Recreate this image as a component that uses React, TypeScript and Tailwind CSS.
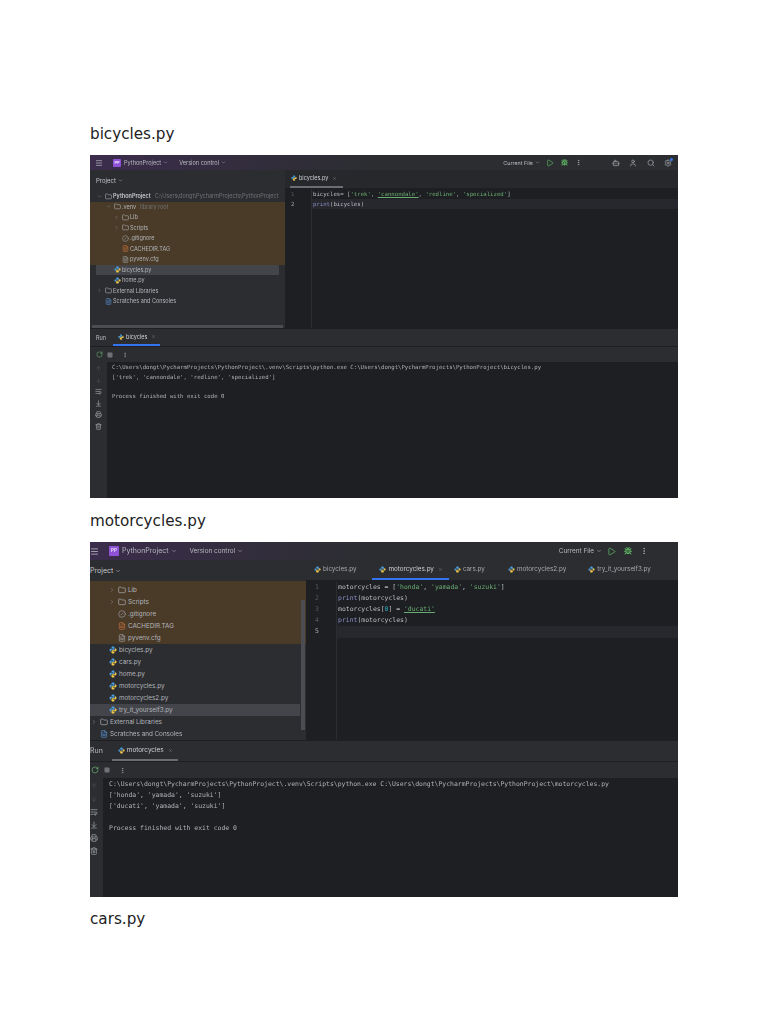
import {
  ArrowDown, ArrowDownToLine, ArrowUp, Bug, ChevronDown, ChevronRight, CircleSlash, FileText, Folder,
  Menu, MoreVertical, Play, Printer, RotateCw, Search, Settings, Square, Trash2, User, WrapText, X, Bot,
} from 'lucide-react';

const mono = "font-['DejaVu_Sans_Mono',monospace]";
const ui = "font-['Inter',sans-serif]";

const PythonIcon = ({ size }: { size: number }) => (
  <svg width={size} height={size} viewBox="0 0 16 16" className="shrink-0">
    <path d="M8 1C5.5 1 5 2 5 3v1.500h3.500V5.500H3C1.500 5.500 1 6.800 1 8.200S1.500 11 3 11h1.200V9.200C4.200 8 5 7.500 6 7.500h3.500c1 0 1.500-.7 1.500-1.500V3c0-1.200-1-2-3-2z" fill="#4b9cd8" />
    <path d="M8 15c2.500 0 3-1 3-2v-1.500H7.500v-1H13c1.500 0 2-1.300 2-2.700S14.500 5 13 5h-1.200v1.800c0 1.200-.8 1.700-1.800 1.700H6.500c-1 0-1.500.7-1.500 1.500v3c0 1.200 1 2 3 2z" fill="#f2c84b" />
  </svg>
);

type Kind = 'folder' | 'py' | 'ignore' | 'tag' | 'cfg' | 'lib' | 'scratch';
type Row = { label: string; pad: string; kind: Kind; chevron?: 'down' | 'right'; note?: string; selected?: boolean; bold?: boolean };

const RowIcon = ({ kind, size }: { kind: Kind; size: number }) => {
  if (kind === 'py') return <PythonIcon size={size} />;
  if (kind === 'ignore') return <CircleSlash size={size} className="shrink-0 text-[#9a9ca3]" />;
  if (kind === 'tag') return <FileText size={size} className="shrink-0 text-[#c4713d]" />;
  if (kind === 'cfg') return <FileText size={size} className="shrink-0 text-[#a4a6ad]" />;
  if (kind === 'scratch') return <FileText size={size} className="shrink-0 text-[#5c93d6]" />;
  return <Folder size={size} className="shrink-0 text-[#b0b2b8]" />;
};

const TreeRow = ({ row, big }: { row: Row; big?: boolean }) => (
  <div className={`flex items-center ${big ? 'h-[12px] gap-[2px] text-[6.3px]' : 'h-[10.5px] gap-[1px] text-[5.5px]'} ${row.pad} ${row.selected ? 'bg-[#43454a]' : ''} ${row.selected && !big ? 'rounded-[1px]' : ''} whitespace-nowrap`}>
    <span className={`flex justify-center shrink-0 text-[#8b8d93] ${big ? 'w-[8px]' : 'w-[9px]'}`}>
      {row.chevron === 'down' && <ChevronDown size={big ? 6 : 5} />}
      {row.chevron === 'right' && <ChevronRight size={big ? 6 : 5} />}
    </span>
    <RowIcon kind={row.kind} size={big ? 8 : 7} />
    <span className={row.bold ? 'font-semibold text-[#c8cad0]' : 'text-[#b4b6bc]'}>{row.label}</span>
    {row.note && <span className="ml-[3px] text-[#6f7177]">{row.note}</span>}
  </div>
);

const Tab = ({ label, className, iconSize = 7, active, close }: { label: string; className: string; iconSize?: number; active?: boolean; close?: boolean }) => (
  <div className={`flex items-center gap-[2px] h-full border-b-2 ${active ? 'border-[#3574f0] text-[#d0d2d8]' : 'border-transparent text-[#a8aab0]'} ${className}`}>
    <PythonIcon size={iconSize} />
    <span>{label}</span>
    {close && <X size={5} className="text-[#7a7c82] ml-[2px]" />}
  </div>
);

const Str = ({ children }: { children: string }) => <span className="text-[#6aab73]">{children}</span>;
const Fn = ({ children }: { children: string }) => <span className="text-[#8c8fc9]">{children}</span>;

const shotOneOrange: Row[] = [
  { label: '.venv', pad: 'pl-[14px]', kind: 'folder', chevron: 'down', note: 'library root' },
  { label: 'Lib', pad: 'pl-[22px]', kind: 'folder', chevron: 'right' },
  { label: 'Scripts', pad: 'pl-[22px]', kind: 'folder', chevron: 'right' },
  { label: '.gitignore', pad: 'pl-[22px]', kind: 'ignore' },
  { label: 'CACHEDIR.TAG', pad: 'pl-[22px]', kind: 'tag' },
  { label: 'pyvenv.cfg', pad: 'pl-[22px]', kind: 'cfg' },
];
const shotOneRest: Row[] = [
  { label: 'home.py', pad: 'pl-[14px]', kind: 'py' },
  { label: 'External Libraries', pad: 'pl-[5px]', kind: 'lib', chevron: 'right' },
  { label: 'Scratches and Consoles', pad: 'pl-[5px]', kind: 'scratch' },
];

const shotTwoOrange: Row[] = [
  { label: 'Lib', pad: 'pl-[18px]', kind: 'folder', chevron: 'right' },
  { label: 'Scripts', pad: 'pl-[18px]', kind: 'folder', chevron: 'right' },
  { label: '.gitignore', pad: 'pl-[18px]', kind: 'ignore' },
  { label: 'CACHEDIR.TAG', pad: 'pl-[18px]', kind: 'tag' },
  { label: 'pyvenv.cfg', pad: 'pl-[18px]', kind: 'cfg' },
];
const shotTwoRest: Row[] = [
  { label: 'bicycles.py', pad: 'pl-[9px]', kind: 'py' },
  { label: 'cars.py', pad: 'pl-[9px]', kind: 'py' },
  { label: 'home.py', pad: 'pl-[9px]', kind: 'py' },
  { label: 'motorcycles.py', pad: 'pl-[9px]', kind: 'py' },
  { label: 'motorcycles2.py', pad: 'pl-[9px]', kind: 'py' },
  { label: 'try_it_yourself3.py', pad: 'pl-[9px]', kind: 'py', selected: true },
  { label: 'External Libraries', pad: 'pl-[0px]', kind: 'lib', chevron: 'right' },
  { label: 'Scratches and Consoles', pad: 'pl-[0px]', kind: 'scratch' },
];

const RunTools = ({ big }: { big?: boolean }) => {
  const s = big ? 8 : 7;
  return (
    <>
      <ArrowUp size={s} className="text-[#4a4c52]" />
      <ArrowDown size={s} className="text-[#4a4c52]" />
      <WrapText size={s} />
      <ArrowDownToLine size={s} />
      <Printer size={s} />
      <Trash2 size={s} />
    </>
  );
};

const ShotOne = () => (
  <div className={`w-[588px] h-[343px] overflow-hidden bg-[#1e1f22] ${ui}`}>
    <div className="flex flex-col h-full blur-[0.6px]">
      <div className="flex items-center h-[15px] shrink-0 pl-[5px] pr-[6px] text-[5.6px] text-[#b8bac0] bg-gradient-to-r from-[#3b2c4c] via-[#2b2d30] to-[#2b2d30]">
        <Menu size={8} className="text-[#c0c2c8]" />
        <span className="flex items-center justify-center ml-[10px] w-[8px] h-[8px] rounded-[1px] bg-[#8f52d6] text-[4px] font-bold text-[#e6d8f8]">PP</span>
        <span className="ml-[3px]">PythonProject</span>
        <ChevronDown size={5} className="ml-[2px]" />
        <span className="ml-[11px]">Version control</span>
        <ChevronDown size={5} className="ml-[2px]" />
        <span className="ml-auto text-[5.4px]">Current File</span>
        <ChevronDown size={5} className="ml-[2px]" />
        <Play size={8} className="ml-[6px] text-[#5fb865]" />
        <Bug size={7} strokeWidth={3} className="ml-[7px] text-[#5fb865]" />
        <MoreVertical size={7} className="ml-[7px]" />
        <Bot size={8} className="ml-[30px] text-[#a8aab0]" />
        <User size={8} className="ml-[9px] text-[#a8aab0]" />
        <Search size={8} className="ml-[10px] text-[#a8aab0]" />
        <span className="relative ml-[9px] text-[#a8aab0]">
          <Settings size={8} />
          <span className="absolute -top-[1px] -right-[1px] w-[3px] h-[3px] rounded-full bg-[#3574f0]" />
        </span>
      </div>
      <div className="flex h-[158px] shrink-0">
        <div className="flex flex-col w-[195px] shrink-0 overflow-hidden bg-[#2b2d30]">
          <div className="flex items-center gap-[2px] h-[21px] pl-[6px] text-[6px] text-[#c4c6cc] shrink-0">
            <span>Project</span>
            <ChevronDown size={5} />
          </div>
          <TreeRow row={{ label: 'PythonProject', pad: 'pl-[5px]', kind: 'folder', chevron: 'down', bold: true, note: 'C:\\Users\\dongt\\PycharmProjects\\PythonProject' }} />
          <div className="bg-[#4a3b28]">
            {shotOneOrange.map((row) => <TreeRow key={row.label} row={row} />)}
          </div>
          <div className="px-[6px]">
            <TreeRow row={{ label: 'bicycles.py', pad: 'pl-[8px]', kind: 'py', selected: true }} />
          </div>
          {shotOneRest.map((row) => <TreeRow key={row.label} row={row} />)}
          <div className="mt-auto mx-[2px] h-[3px] bg-[#4b4d52]" />
        </div>
        <div className="flex flex-col flex-1 min-w-0">
          <div className="flex items-end h-[19px] pl-[5px] bg-[#26282b] border-b border-[#1e1f22] text-[5.5px] shrink-0">
            <Tab label="bicycles.py" close active iconSize={6} className="pl-[1px] pr-[6px] !border-[#6b6d72]" />
          </div>
          <div className={`flex flex-1 min-h-0 text-[5.67px] leading-[10px] ${mono}`}>
            <div className="flex flex-col w-[27px] pl-[6px] border-r border-[#2b2d30] text-[#55575c] shrink-0">
              <span>1</span>
              <span className="text-[#a8aab0]">2</span>
            </div>
            <div className="flex flex-col flex-1 min-w-0 text-[#bcbec4] whitespace-nowrap">
              <div className="pl-[1px]">bicycles= [<Str>'trek'</Str>, <span className="text-[#6aab73] underline">'cannondale'</span>, <Str>'redline'</Str>, <Str>'specialized'</Str>]</div>
              <div className="pl-[1px] bg-[#26282e]"><Fn>print</Fn>(bicycles)</div>
            </div>
          </div>
        </div>
      </div>
      <div className="flex items-end gap-[7px] h-[18px] pl-[6px] shrink-0 bg-[#2b2d30] border-t border-[#1e1f22] text-[5.5px] text-[#bcbec4]">
        <span className="self-center">Run</span>
        <Tab label="bicycles" close active iconSize={6} className="pl-[5px] pr-[4px]" />
      </div>
      <div className="flex items-center gap-[4px] h-[16px] pl-[6px] shrink-0 bg-[#2b2d30] border-t border-[#1e1f22] text-[#a8aab0]">
        <RotateCw size={7} className="text-[#6bb06f]" />
        <Square size={6} fill="#6f7177" className="text-[#6f7177]" />
        <MoreVertical size={6} className="ml-[5px]" />
      </div>
      <div className="flex flex-1 min-h-0">
        <div className="flex flex-col items-center gap-[4.5px] w-[17px] pt-[3px] shrink-0 bg-[#2b2d30] text-[#a8aab0]">
          <RunTools />
        </div>
        <div className={`flex-1 min-w-0 pl-[5px] pt-[1px] text-[5.67px] leading-[9.8px] text-[#b0b2b8] whitespace-pre ${mono}`}>
          <div>C:\Users\dongt\PycharmProjects\PythonProject\.venv\Scripts\python.exe C:\Users\dongt\PycharmProjects\PythonProject\bicycles.py</div>
          <div>['trek', 'cannondale', 'redline', 'specialized']</div>
          <div>&nbsp;</div>
          <div>Process finished with exit code 0</div>
        </div>
      </div>
    </div>
  </div>
);

const ShotTwo = () => (
  <div className={`w-[588px] h-[355px] overflow-hidden bg-[#1e1f22] ${ui}`}>
    <div className="flex flex-col h-full blur-[0.6px]">
      <div className="flex items-center h-[18px] shrink-0 pr-[30px] text-[7px] text-[#b8bac0] bg-gradient-to-r from-[#3b2c4c] via-[#2b2d30] to-[#2b2d30]">
        <Menu size={9} className="text-[#c0c2c8]" />
        <span className="flex items-center justify-center ml-[10px] w-[10px] h-[10px] rounded-[1px] bg-[#8f52d6] text-[4.5px] font-bold text-[#e6d8f8]">PP</span>
        <span className="ml-[3px]">PythonProject</span>
        <ChevronDown size={6} className="ml-[2px]" />
        <span className="ml-[13px] text-[6.4px]">Version control</span>
        <ChevronDown size={6} className="ml-[2px]" />
        <span className="ml-auto text-[6.4px]">Current File</span>
        <ChevronDown size={6} className="ml-[2px]" />
        <Play size={9} className="ml-[5px] text-[#5fb865]" />
        <Bug size={8} strokeWidth={3} className="ml-[8px] text-[#5fb865]" />
        <MoreVertical size={8} className="ml-[8px]" />
      </div>
      <div className="flex h-[180px] shrink-0">
        <div className="flex w-[216px] shrink-0 bg-[#2b2d30]">
          <div className="flex flex-col w-[210px] shrink-0">
            <div className="flex items-center gap-[2px] h-[21px] shrink-0 text-[7px] text-[#c4c6cc]">
              <span>Project</span>
              <ChevronDown size={6} />
            </div>
            <div className="bg-[#4a3b28] w-[216px] h-[63px] pt-[3px] shrink-0">
              {shotTwoOrange.map((row) => <TreeRow key={row.label} row={row} big />)}
            </div>
            {shotTwoRest.map((row) => <TreeRow key={row.label} row={row} big />)}
          </div>
          <div className="flex flex-col w-[6px] shrink-0 pt-[40px] pb-[10px]">
            <div className="flex-1 mx-[1px] bg-[#4b4d52]" />
          </div>
        </div>
        <div className="flex flex-col flex-1 min-w-0">
          <div className="flex items-center h-[21px] shrink-0 bg-[#2b2d30] border-b border-[#1e1f22] text-[6.3px] whitespace-nowrap">
            <Tab label="bicycles.py" className="ml-[8px]" />
            <Tab label="motorcycles.py" active close className="ml-[16px] pl-[7px] pr-[6px]" />
            <Tab label="cars.py" className="ml-[5px]" />
            <Tab label="motorcycles2.py" className="ml-[23px]" />
            <Tab label="try_it_yourself3.py" className="ml-[22px]" />
          </div>
          <div className={`flex flex-1 min-h-0 pt-[1px] text-[6.45px] leading-[11px] ${mono}`}>
            <div className="flex flex-col w-[31px] pl-[9px] border-r border-[#2b2d30] text-[#55575c] shrink-0">
              <span>1</span>
              <span>2</span>
              <span>3</span>
              <span>4</span>
              <span className="text-[#a8aab0]">5</span>
            </div>
            <div className="flex flex-col flex-1 min-w-0 pl-[1px] text-[#bcbec4] whitespace-nowrap">
              <div>motorcycles = [<Str>'honda'</Str>, <Str>'yamada'</Str>, <Str>'suzuki'</Str>]</div>
              <div><Fn>print</Fn>(motorcycles)</div>
              <div>motorcycles[<span className="text-[#2aacb8]">0</span>] = <span className="text-[#6aab73] underline">'ducati'</span></div>
              <div><Fn>print</Fn>(motorcycles)</div>
              <div className="h-[12px] -ml-[1px] bg-[#26282e]" />
            </div>
          </div>
        </div>
      </div>
      <div className="flex items-end gap-[9px] h-[21px] shrink-0 bg-[#2b2d30] border-t border-[#1e1f22] text-[6.4px] text-[#bcbec4]">
        <span className="self-center text-[7px]">Run</span>
        <Tab label="motorcycles" close active className="pl-[6px] pr-[5px] !border-[#6b6d72]" />
      </div>
      <div className="flex items-center gap-[5px] h-[17px] shrink-0 pl-[1px] bg-[#2b2d30] border-t border-[#1e1f22] text-[#a8aab0]">
        <RotateCw size={8} className="text-[#6bb06f]" />
        <Square size={6} fill="#6f7177" className="text-[#6f7177]" />
        <MoreVertical size={7} className="ml-[4px]" />
      </div>
      <div className="flex flex-1 min-h-0">
        <div className="flex flex-col items-center gap-[5px] w-[13px] pt-[4px] pr-[5px] shrink-0 bg-[#2b2d30] text-[#a8aab0]">
          <RunTools big />
        </div>
        <div className={`flex-1 min-w-0 pl-[6px] pt-[1px] text-[6.45px] leading-[11px] text-[#b0b2b8] whitespace-pre ${mono}`}>
          <div>C:\Users\dongt\PycharmProjects\PythonProject\.venv\Scripts\python.exe C:\Users\dongt\PycharmProjects\PythonProject\motorcycles.py</div>
          <div>['honda', 'yamada', 'suzuki']</div>
          <div>['ducati', 'yamada', 'suzuki']</div>
          <div>&nbsp;</div>
          <div>Process finished with exit code 0</div>
        </div>
      </div>
    </div>
  </div>
);

const App = () => {
  return (
    <main className="flex flex-col w-[768px] h-[1024px] overflow-hidden bg-white pl-[90px] pt-[123px] text-[15.2px] leading-[22px] text-[#222222] font-['DejaVu_Sans',sans-serif]">
      <h1 className="mb-[10px]">bicycles.py</h1>
      <ShotOne />
      <h1 className="mt-[12px] mb-[10px]">motorcycles.py</h1>
      <ShotTwo />
      <h1 className="mt-[11px]">cars.py</h1>
    </main>
  );
};

export default App;
